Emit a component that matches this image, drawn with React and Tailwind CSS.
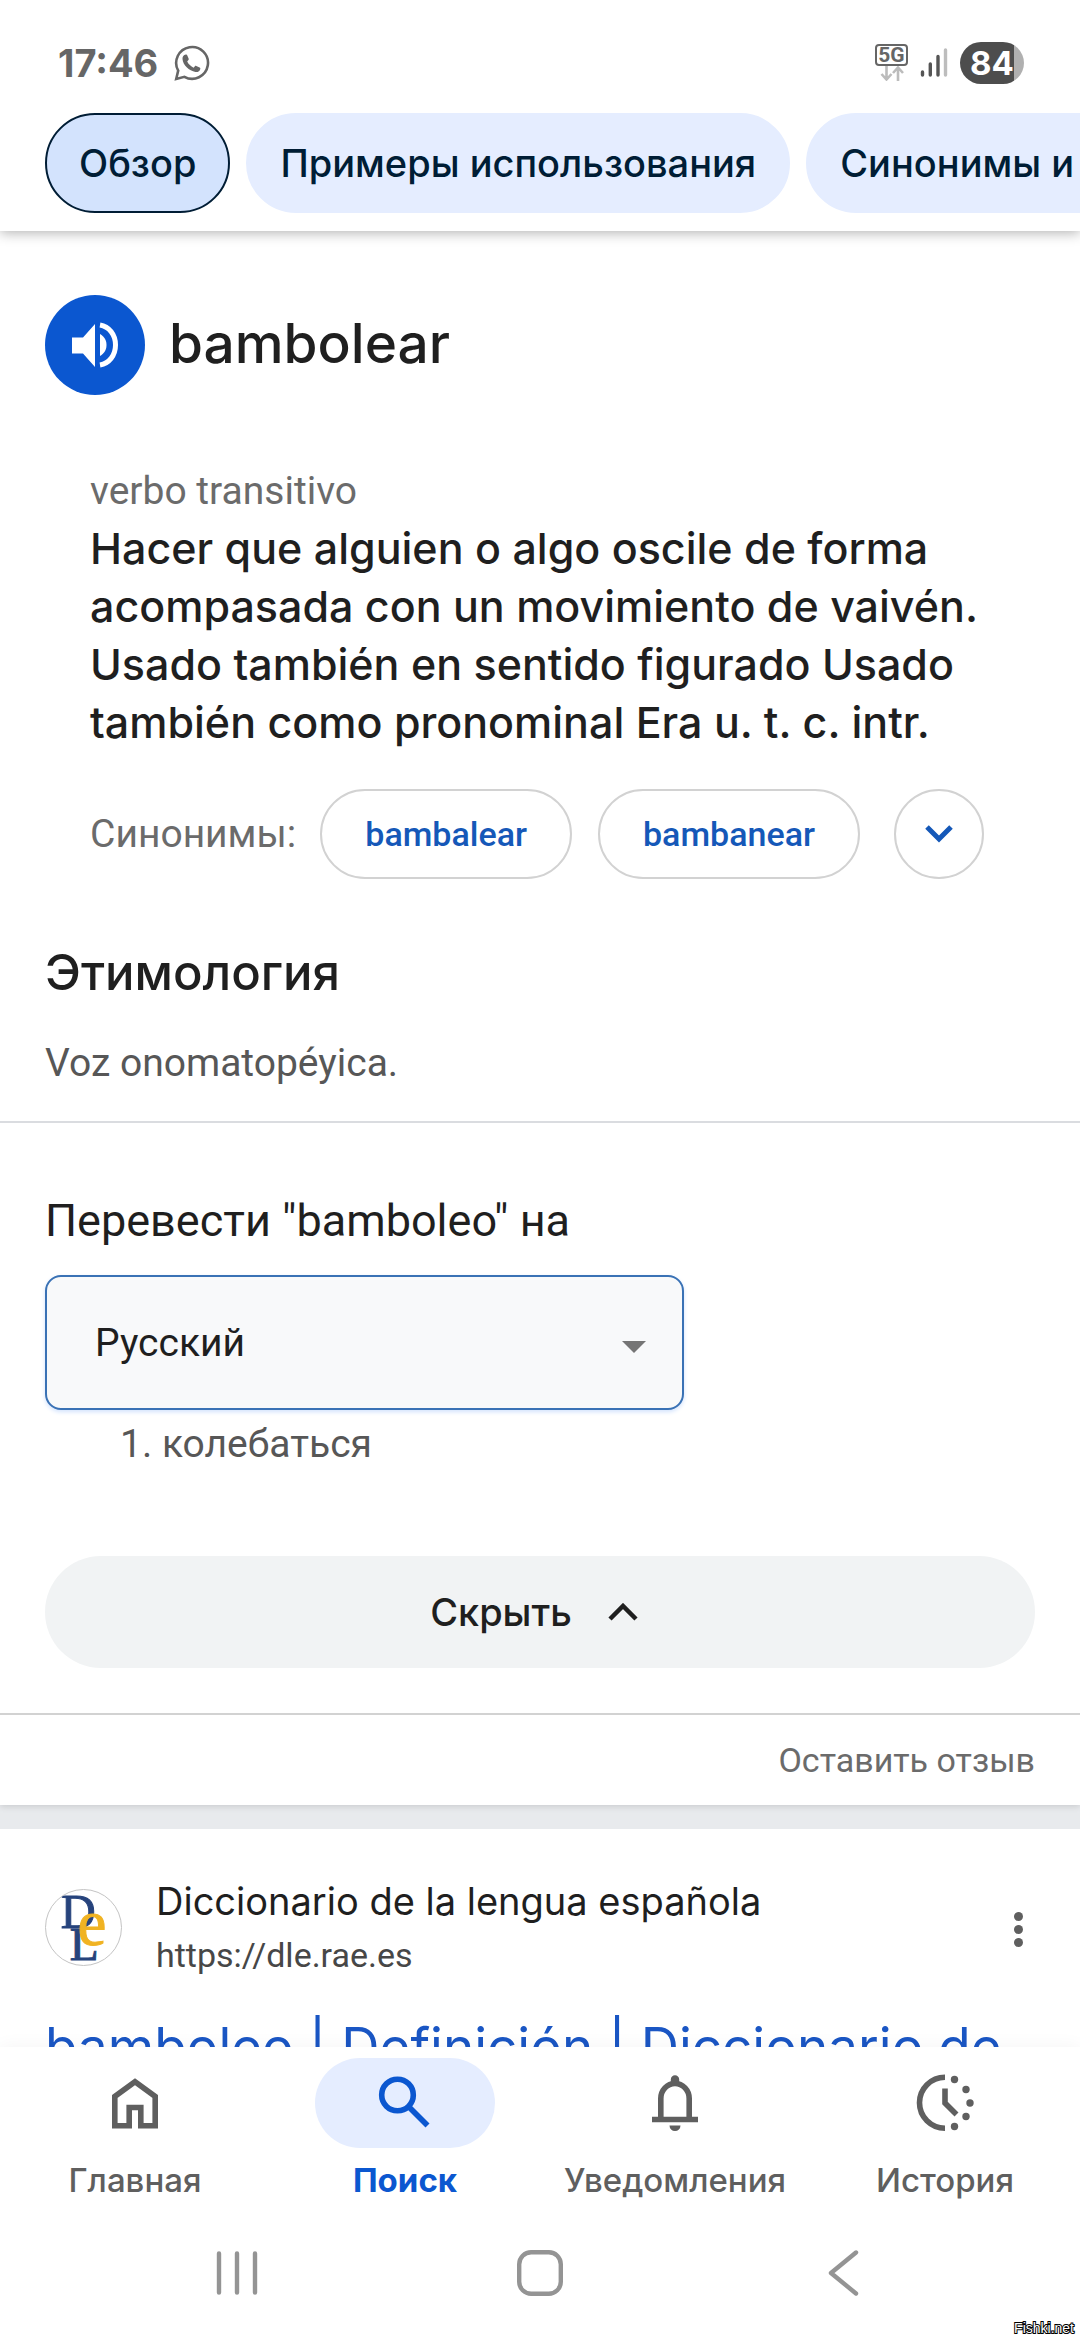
import React from 'react'

const chips = ["Обзор", "Примеры использования", "Синонимы и антонимы"];

const synonyms = ["bambalear", "bambanear"];

const WhatsAppIcon = () => (
    <svg viewBox="0 0 36 36" className="w-9 h-9" fill="none">
        <path d="M2.200 34 L4.200 25.600 A15.900 15.900 0 1 1 10.400 31.800 Z" stroke="#666" strokeWidth="2.6" strokeLinejoin="miter" />
        <path d="M11.800 9.600c.9 0 1.200.2 1.500.9l1.300 3c.3.8.1 1.200-.4 1.800l-1 1.200c1.200 2.600 3.700 5 6.400 6.200l1.300-1.500c.4-.5.8-.6 1.400-.3l3.300 1.700c.6.300.8.6.7 1.300-.3 2.200-2.500 3.400-4.800 3.100-6.500-.9-12.600-7-13-12.900-.1-2.300 1-4.500 3.300-4.500z" fill="#666" />
    </svg>
);

const NetworkIcon = () => (
    <div className="flex flex-col items-center w-[33px]">
        <span className="w-full rounded border-2 border-[#666] font-[Roboto] text-center text-[21px] leading-[18px] font-bold text-[#666]">5G</span>
        <svg viewBox="0 0 24 15" className="w-6 h-[15px]" fill="none" stroke="#bcbcbc" strokeWidth="2.6">
            <path d="M6.500 0v13M1.500 8l5 5.500 5-5.500M18 15V2M13 7l5-5.500L23 7" />
        </svg>
    </div>
);

const SignalIcon = () => (
    <svg viewBox="0 0 28 30" className="w-7 h-[30px]" strokeWidth="3.4" strokeLinecap="round">
        <path d="M2.500 24v3M10.300 16v11M18 8.500V27" stroke="#555" />
        <path d="M25.500 2v25" stroke="#bdbdbd" />
    </svg>
);

const SpeakerIcon = () => (
    <svg viewBox="0 0 48 46" className="w-12 h-[46px]" fill="white">
        <path d="M1 15.500h11L24 2v43L12 31.500H1z" />
        <path d="M29 12c4.500 2.500 6.500 6.500 6.500 11s-2 8.500-6.500 11z" />
        <path d="M29 3c9 1.500 15.500 9.500 15.500 20S38 41.500 29 43" fill="none" stroke="white" strokeWidth="5" />
    </svg>
);

const DleLogo = () => (
    <svg viewBox="0 0 76 76" className="w-[77px] h-[77px] shrink-0 rounded-full border border-[#c4c4c4]" fontFamily="'Liberation Serif', serif">
        <text x="15" y="38" fontSize="49" fill="#26437c" stroke="#26437c">D</text>
        <text x="24" y="71" fontSize="48" fill="#26437c" stroke="#26437c">L</text>
        <text x="32" y="56" fontSize="66" fill="#f0b323" stroke="#f0b323">e</text>
    </svg>
);

const HomeIcon = () => (
    <svg viewBox="0 0 60 60" className="w-[60px] h-[60px]" fill="none" stroke="#5f5f5f" strokeWidth="5.6">
        <path d="M9.800 52.700V23.500L30 8.800l20.200 14.700v29.200H35.800V34.500H24.200v18.200z" />
    </svg>
);

const SearchIcon = () => (
    <svg viewBox="0 0 60 60" className="w-[60px] h-[60px]" fill="none" stroke="#0b57d0" strokeWidth="5.600">
        <circle cx="22.500" cy="22" r="15.800" />
        <path d="M33.500 33.500L52.500 52.500" />
    </svg>
);

const BellIcon = () => (
    <svg viewBox="0 0 60 60" className="w-[60px] h-[60px]" fill="none" stroke="#5f5f5f" strokeWidth="5.600">
        <path d="M7 46.500h46M15.800 46V25.500a14.200 15 0 0 1 28.400 0V46" />
        <path d="M25.800 11V6.500a4.200 4.200 0 0 1 8.400 0V11zM24.500 52.500h11a5.500 5.500 0 0 1-11 0z" fill="#5f5f5f" stroke="none" />
    </svg>
);

const HistoryIcon = () => (
    <svg viewBox="0 0 60 60" className="w-[60px] h-[60px]" fill="none" stroke="#5f5f5f" strokeWidth="5.600">
        <path d="M30 4.200a25.500 25.500 0 0 0 0 51M30 15.500V30l11.500 11.500" />
        <g fill="#5f5f5f" stroke="none">
            <circle cx="39.500" cy="6.500" r="3.700" />
            <circle cx="51" cy="16.500" r="3.700" />
            <circle cx="55" cy="30" r="3.700" />
            <circle cx="51" cy="43.500" r="3.700" />
            <circle cx="39.500" cy="53.500" r="3.700" />
        </g>
    </svg>
);

const tabs = [
    { label: "Главная", icon: HomeIcon },
    { label: "Поиск", icon: SearchIcon, active: true },
    { label: "Уведомления", icon: BellIcon },
    { label: "История", icon: HistoryIcon },
];

const StatusBar = () => (
    <div className="flex items-center justify-between h-[113px] pl-[58px] pr-14 pt-3">
        <div className="flex items-center gap-4">
            <span className="text-[38px] leading-[40px] font-bold text-[#666]">17:46</span>
            <WhatsAppIcon />
        </div>
        <div className="flex items-center gap-3">
            <NetworkIcon />
            <SignalIcon />
            <span className="w-16 h-[42px] rounded-full text-center text-[33px] leading-[42px] font-bold text-white bg-linear-to-r from-[#4d4d4d] from-84% to-[#b0b0b0] to-84%">84</span>
        </div>
    </div>
);

const ChipBar = () => (
    <div className="flex gap-4 pl-[45px] pb-[18px] overflow-hidden">
        {chips.map((chip, i) => (
            <button
                key={chip}
                className={`h-[100px] px-8 shrink-0 rounded-full border-2 whitespace-nowrap text-[38px] leading-[56px] font-medium text-[#001d35] ${i === 0 ? "bg-[#d3e3fd] border-[#001d35]" : "bg-[#e5edff] border-[#e5edff]"}`}
            >
                {chip}
            </button>
        ))}
    </div>
);

const Definition = () => (
    <section className="bg-white">
        <div className="px-[45px]">
            <div className="flex items-center gap-6 pt-16">
                <button aria-label="bambolear" className="flex items-center justify-center w-[100px] h-[100px] rounded-full bg-[#0b57d0]">
                    <SpeakerIcon />
                </button>
                <h1 className="pb-1 text-[55px] leading-[64px] font-medium text-[#1f1f1f]">bambolear</h1>
            </div>

            <div className="px-[45px] pt-[68px]">
                <p className="font-[Roboto] text-[39px] leading-[56px] text-[#6b6b6b]">verbo transitivo</p>
                <p className="text-[43px] leading-[58px] font-medium text-[#1f1f1f]">
                    Hacer que alguien o algo oscile de forma acompasada con un movimiento de vaivén. Usado también en sentido figurado Usado también como pronominal Era u. t. c. intr.
                </p>
                <div className="flex items-center pt-[38px] font-[Roboto]">
                    <span className="mr-6 text-[39px] leading-[56px] text-[#6b6b6b]">Синонимы:</span>
                    {synonyms.map((word) => (
                        <a key={word} href="#" className="flex items-center h-[90px] mr-[26px] px-[43px] rounded-full border-2 border-[#d2d2d2] text-[34px] leading-[40px] font-medium text-[#1558b8]">
                            {word}
                        </a>
                    ))}
                    <button aria-label="Ещё" className="flex items-center justify-center w-[90px] h-[90px] ml-2 rounded-full border-2 border-[#d2d2d2]">
                        <svg viewBox="0 0 28 18" className="w-7 h-[18px]" fill="none" stroke="#1558b8" strokeWidth="5"><path d="M2 2l12 12L26 2" /></svg>
                    </button>
                </div>
            </div>

            <h2 className="pt-[62px] text-[49px] leading-[64px] font-medium text-[#1f1f1f]">Этимология</h2>
            <p className="py-[30px] font-[Roboto] text-[39px] leading-[56px] text-[#575757]">Voz onomatopéyica.</p>
        </div>
        <hr className="border-t-2 border-[#dadce0]" />
    </section>
);

const Translate = () => (
    <section className="bg-white font-[Roboto]">
        <div className="px-[45px] pt-[68px] pb-[45px]">
            <label htmlFor="lang" className="block text-[45px] leading-[60px] text-[#1f1f1f]">Перевести "bamboleo" на</label>
            <div className="relative mt-6 w-full max-w-[639px]">
                <select id="lang" className="block w-full h-[135px] pl-12 appearance-none rounded-2xl border-2 border-[#3a72b5] bg-[#f8f9fa] text-[39px] leading-[56px] text-[#1f1f1f] shadow-[0_2px_4px_#d3e3fd]">
                    <option>Русский</option>
                </select>
                <svg viewBox="0 0 24 12" className="absolute right-[38px] top-[66px] w-6 h-3 pointer-events-none" fill="#757575"><path d="M0 0h24L12 12z" /></svg>
            </div>
            <ol className="pt-1.5 pl-[75px] list-decimal list-inside text-[39px] leading-[56px] text-[#575757]">
                <li>колебаться</li>
            </ol>
            <button className="flex items-center justify-center gap-9 w-full h-[112px] mt-[84px] pr-3 rounded-full bg-[#f1f3f4] font-[Inter] text-[38px] leading-[56px] font-medium text-[#1f1f1f]">
                Скрыть
                <svg viewBox="0 0 30 18" className="w-[30px] h-[18px]" fill="none" stroke="#1f1f1f" strokeWidth="4.500"><path d="M2 16L15 3l13 13" /></svg>
            </button>
        </div>
        <div className="flex justify-end px-[45px] py-4 border-t-2 border-[#d2d2d2]">
            <a href="#" className="text-[34px] leading-[58px] text-[#6b6b6b]">Оставить отзыв</a>
        </div>
    </section>
);

const SearchResult = () => (
    <article className="px-[45px] pt-11 bg-white">
        <div className="flex items-center">
            <DleLogo />
            <div className="flex-1 pl-[34px]">
                <p className="text-[38px] leading-[56px] text-[#1f1f1f]">Diccionario de la lengua española</p>
                <p className="font-[Roboto] text-[34px] leading-[52px] text-[#474747]">https://dle.rae.es</p>
            </div>
            <button aria-label="Меню" className="flex flex-col gap-1 px-3 pt-1">
                <i className="w-[9px] h-[9px] rounded-full bg-[#5f5f5f]" />
                <i className="w-[9px] h-[9px] rounded-full bg-[#5f5f5f]" />
                <i className="w-[9px] h-[9px] rounded-full bg-[#5f5f5f]" />
            </button>
        </div>
        <h3 className="pt-8 text-[53px] leading-[68px] whitespace-nowrap text-[#1a56c4]">
            <a href="#">bamboleo | Definición | Diccionario de</a>
        </h3>
    </article>
);

const BottomNav = () => (
    <nav className="grid grid-cols-4 pt-[11px]">
        {tabs.map(({ label, icon: Icon, active }) => (
            <a key={label} href="#" className="flex flex-col items-center">
                <span className={`flex items-center justify-center w-[180px] h-[90px] rounded-full ${active ? "bg-[#e5edff]" : ""}`}>
                    <Icon />
                </span>
                <span className={`pt-3 text-[33px] leading-[40px] ${active ? "font-bold text-[#0b57d0]" : "font-medium text-[#5f5f5f]"}`}>{label}</span>
            </a>
        ))}
    </nav>
);

const SystemNav = () => (
    <div className="relative flex items-center h-[140px] px-[86px] pt-[6px]">
        <button aria-label="Недавние" className="flex-1 flex justify-center">
            <svg viewBox="0 0 46 46" className="w-[46px] h-[46px]" fill="none" stroke="#949494" strokeWidth="4.400" strokeLinecap="round"><path d="M5 3.500v39M23 3.500v39M41 3.500v39" /></svg>
        </button>
        <button aria-label="Домой" className="flex-1 flex justify-center">
            <svg viewBox="0 0 46 46" className="w-[46px] h-[46px]" fill="none" stroke="#949494" strokeWidth="4.400"><rect x="2.200" y="2.200" width="41.600" height="41.600" rx="12" /></svg>
        </button>
        <button aria-label="Назад" className="flex-1 flex justify-center">
            <svg viewBox="0 0 46 46" className="w-[46px] h-[46px]" fill="none" stroke="#949494" strokeWidth="4.400" strokeLinecap="round" strokeLinejoin="round"><path d="M36 2.500L11 23l25 20.500" /></svg>
        </button>
        <span className="absolute right-1.5 bottom-0.5 font-['Liberation_Sans'] text-[14px] leading-[20px] text-white [-webkit-text-stroke:2px_black] [paint-order:stroke_fill]">Fishki.net</span>
    </div>
);

const App = () => {
    return (
        <div className="flex flex-col h-screen overflow-hidden bg-white font-[Inter,sans-serif]">
            <header className="relative bg-white shadow-[0_2px_12px_rgba(0,0,0,0.3)]">
                <StatusBar />
                <ChipBar />
            </header>
            <main className="flex-1 min-h-0 overflow-hidden bg-[#e8eaed]">
                <div className="flex flex-col gap-6">
                    <div className="shadow-[0_2px_6px_rgba(0,0,0,0.12)]">
                        <Definition />
                        <Translate />
                    </div>
                    <SearchResult />
                </div>
            </main>
            <footer className="relative bg-white shadow-[0_-2px_16px_rgba(0,0,0,0.04)]">
                <BottomNav />
                <SystemNav />
            </footer>
        </div>
    )
}

export default App
